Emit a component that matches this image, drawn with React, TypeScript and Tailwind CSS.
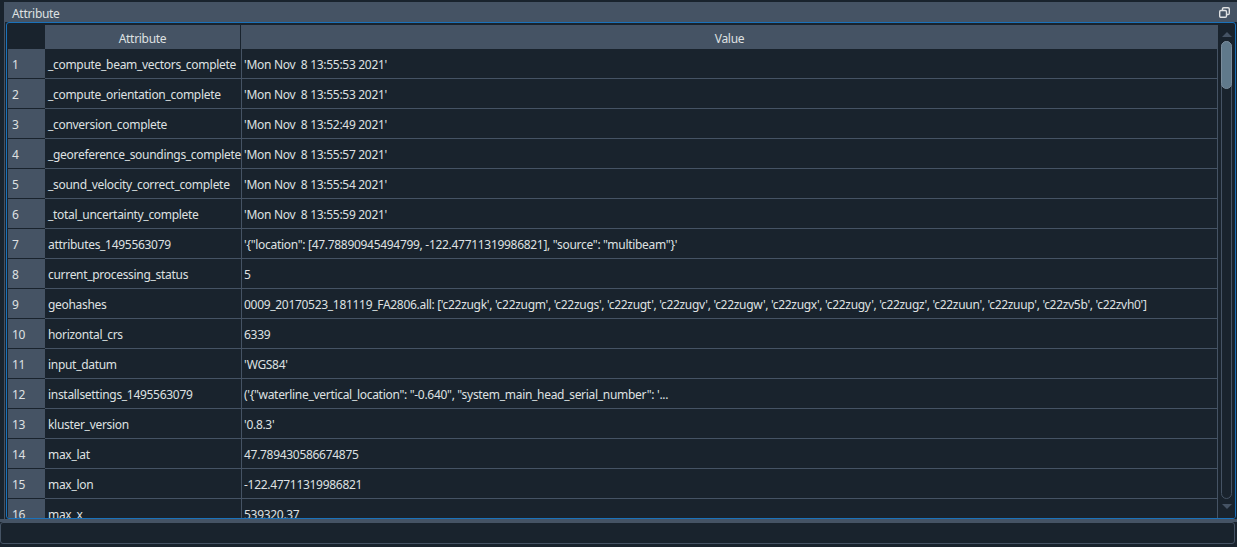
import React from 'react';

const rows: [string, string][] = [
  ['_compute_beam_vectors_complete', "'Mon Nov  8 13:55:53 2021'"],
  ['_compute_orientation_complete', "'Mon Nov  8 13:55:53 2021'"],
  ['_conversion_complete', "'Mon Nov  8 13:52:49 2021'"],
  ['_georeference_soundings_complete', "'Mon Nov  8 13:55:57 2021'"],
  ['_sound_velocity_correct_complete', "'Mon Nov  8 13:55:54 2021'"],
  ['_total_uncertainty_complete', "'Mon Nov  8 13:55:59 2021'"],
  ['attributes_1495563079', `'{"location": [47.78890945494799, -122.47711319986821], "source": "multibeam"}'`],
  ['current_processing_status', '5'],
  ['geohashes', "0009_20170523_181119_FA2806.all: ['c22zugk', 'c22zugm', 'c22zugs', 'c22zugt', 'c22zugv', 'c22zugw', 'c22zugx', 'c22zugy', 'c22zugz', 'c22zuun', 'c22zuup', 'c22zv5b', 'c22zvh0']"],
  ['horizontal_crs', '6339'],
  ['input_datum', "'WGS84'"],
  ['installsettings_1495563079', `('{"waterline_vertical_location": "-0.640", "system_main_head_serial_number": '...`],
  ['kluster_version', "'0.8.3'"],
  ['max_lat', '47.789430586674875'],
  ['max_lon', '-122.47711319986821'],
  ['max_x', '539320.37'],
];

const FloatIcon = () => (
  <svg width="11" height="11" viewBox="0 0 11 11" fill="none" stroke="#dfe1e2" strokeWidth="1.4">
    <rect x="3.5" y="0.7" width="6.8" height="6.8" rx="1.2" />
    <rect x="0.7" y="3.5" width="6.8" height="6.8" rx="1.2" fill="#455364" />
  </svg>
);

const Scrollbar = () => (
  <div className="w-[17px] flex flex-col items-center bg-[#19232d]">
    <svg width="10" height="6" viewBox="0 0 10 6" className="mt-[7px]">
      <polygon points="5,0 10,5 0,5" fill="#455364" />
    </svg>
    <div className="mt-[3px] w-[11px] h-[458px] rounded-full border border-[#455364] relative">
      <div className="absolute -left-px -top-px w-[11px] h-[48px] rounded-full bg-[#60798b] border border-[#7a8c9c]" />
    </div>
    <svg width="10" height="6" viewBox="0 0 10 6" className="mt-[5px]">
      <polygon points="0,0 10,0 5,5" fill="#455364" />
    </svg>
  </div>
);

export default function App() {
  return (
    <div
      className="w-[1237px] h-[547px] bg-[#19232d] flex flex-col overflow-hidden text-[#dfe1e2] text-[12px] tracking-[-0.3px]"
      style={{ fontFamily: '"Noto Sans", "Open Sans", sans-serif' }}
    >
      <div className="h-[2px] shrink-0" />
      {/* dock title */}
      <div className="ml-[4px] h-[20px] bg-[#455364] flex items-center justify-between pl-[8px] pr-[7px] shrink-0">
        <span className="leading-none pt-[4px]">Attribute</span>
        <FloatIcon />
      </div>

      {/* table frame */}
      <div className="ml-[4px] h-[497px] border-l border-[#455364] pl-px flex shrink-0">
        <div className="flex-1 mr-px border border-[#1a72bb] rounded-[3px] pt-[2px] pl-px flex overflow-hidden">
          <div className="flex-1 flex flex-col overflow-hidden">
            {/* header */}
            <div className="flex h-[24px] shrink-0">
              <div className="w-[37px] bg-[#19232d]" />
              <div className="w-[196px] bg-[#455364] flex items-center justify-center pt-[3px] border-r border-[#19232d]">Attribute</div>
              <div className="flex-1 bg-[#455364] flex items-center justify-center pt-[3px]">Value</div>
            </div>
            {rows.map(([k, v], i) => (
              <div key={k} className="flex h-[30px] shrink-0">
                <div className="w-[37px] bg-[#455364] border-b border-[#19232d] pl-[4px] pt-[3px] flex items-center">{i + 1}</div>
                <div className="w-[197px] border-b border-r border-[#455364] pl-[3px] pt-[3px] flex items-center whitespace-pre">{k}</div>
                <div className="flex-1 border-b border-r border-[#455364] pl-[2px] pt-[3px] flex items-center whitespace-pre">{v}</div>
              </div>
            ))}
          </div>
          <Scrollbar />
        </div>
      </div>

      {/* bottom */}
      <div className="h-[3px] bg-[#455364] shrink-0" />
      <div className="h-[22px] mr-[2px] border border-[#455364] rounded-[3px] bg-[#19232d] shrink-0" />
    </div>
  );
}
